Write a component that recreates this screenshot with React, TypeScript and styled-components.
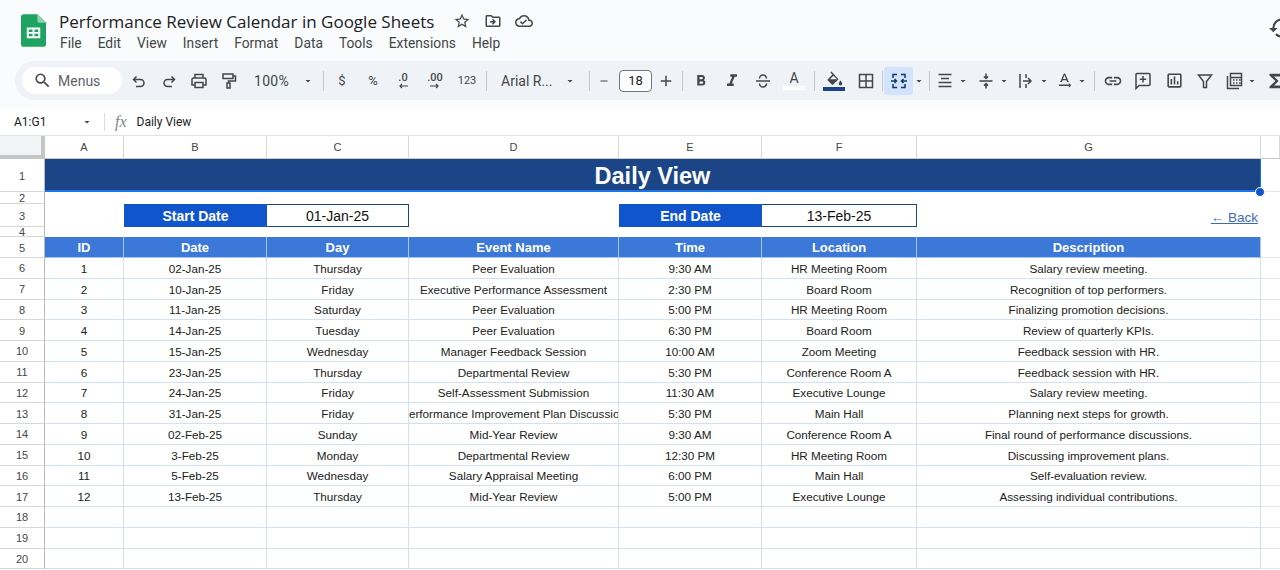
import React from "react";
import styled, { createGlobalStyle } from "styled-components";
import {
    MdSearch,
    MdArrowDropDown,
    MdAdd,
    MdRemove,
    MdFormatBold,
    MdFormatItalic,
    MdTextRotationNone,
    MdLink,
    MdOutlineInsertChart,
    MdFunctions,
    MdOutlineStarBorder,
    MdOutlineDriveFileMove,
    MdOutlineCloudDone,
    MdHistory,
} from "react-icons/md";

const GlobalStyle = createGlobalStyle`
    html, body {
        margin: 0;
        padding: 0;
        background: #fff;
        overflow: hidden;
    }
`;

const Page = styled.div`
    width: 1280px;
    height: 570px;
    overflow: hidden;
    font-family: "Liberation Sans", Arial, sans-serif;
`;

const Chrome = styled.div`
    height: 108px;
    background: #f9fbfd;
    overflow: hidden;
`;

const TitleBar = styled.div`
    height: 61px;
    display: flex;
    align-items: flex-start;
    padding-left: 21px;
`;

const Logo = styled.svg`
    width: 25px;
    height: 33px;
    margin-top: 14px;
    flex: none;
`;

const TitleBlock = styled.div`
    margin-left: 13px;
    padding-top: 10px;
    flex: 1;
`;

const TitleRow = styled.div`
    display: flex;
    align-items: center;
    height: 22px;
    color: #3c4043;
`;

const DocTitle = styled.div`
    font-family: "Open Sans", sans-serif;
    font-size: 17px;
    color: #202124;
    width: 387px;
    white-space: nowrap;
`;

const TitleIcon = styled.span`
    width: 31px;
    display: flex;
    justify-content: center;
    font-size: 18px;
    color: #444746;
`;

const MenuRow = styled.div`
    display: flex;
    margin-top: 1px;
    height: 20px;
    align-items: center;
    gap: 16px;
    padding-left: 1px;
    font-family: "Roboto", sans-serif;
    font-size: 13.8px;
    color: #444746;
`;

const HistoryIcon = styled.div`
    font-size: 26px;
    color: #444746;
    margin-top: 15px;
    margin-right: -14px;
    line-height: 0;
`;

const Toolbar = styled.div`
    height: 39px;
    margin-left: 15px;
    width: 1300px;
    padding-left: 7px;
    box-sizing: border-box;
    background: #eff3f8;
    border-radius: 20px 0 0 20px;
    display: flex;
    align-items: center;
    color: #444746;
`;

const SearchPill = styled.div`
    width: 100px;
    height: 27px;
    box-sizing: border-box;
    background: #fff;
    border-radius: 14px;
    display: flex;
    align-items: center;
    padding-left: 11px;
    gap: 6px;
    font-family: "Roboto", sans-serif;
    font-size: 14px;
    color: #5f6368;
    margin-right: 2px;
    flex: none;
`;

const Tool = styled.div<{ $w: number; $active?: boolean; $size?: number }>`
    width: ${(p) => p.$w}px;
    height: 28px;
    flex: none;
    display: flex;
    align-items: center;
    justify-content: center;
    font-size: ${(p) => p.$size ?? 19}px;
    font-family: "Roboto", sans-serif;
    border-radius: 3px;
    background: ${(p) => (p.$active ? "#d3e3fd" : "transparent")};
    color: ${(p) => (p.$active ? "#0b3a66" : "#444746")};
`;

const ToolText = styled(Tool)`
    font-size: 13px;
`;

const Caret = styled.div`
    width: 12px;
    height: 28px;
    flex: none;
    display: flex;
    align-items: center;
    justify-content: center;
    font-size: 20px;
    color: #444746;
`;

const Sep = styled.div<{ $w: number }>`
    width: ${(p) => p.$w}px;
    height: 20px;
    flex: none;
    display: flex;
    justify-content: center;

    &:after {
        content: "";
        width: 1px;
        background: #c7c9cc;
    }
`;

const SizeBox = styled.div`
    width: 33px;
    height: 22px;
    box-sizing: border-box;
    margin: 0 2px 0 9px;
    border: 1px solid #747775;
    border-radius: 4px;
    background: #fbfcfe;
    display: flex;
    align-items: center;
    justify-content: center;
    font-family: "Roboto", sans-serif;
    font-size: 13px;
    color: #202124;
    flex: none;
`;

const ZoomLabel = styled.div`
    width: 58px;
    padding-left: 10px;
    box-sizing: border-box;
    font-family: "Roboto", sans-serif;
    font-size: 14px;
    letter-spacing: 0.3px;
    flex: none;
`;

const FontLabel = styled.div`
    width: 68px;
    padding-left: 5px;
    box-sizing: border-box;
    font-family: "Roboto", sans-serif;
    font-size: 14px;
    white-space: nowrap;
    flex: none;
`;

const Stack = styled.div`
    display: flex;
    flex-direction: column;
    align-items: center;
    line-height: 1;
`;

const DecimalText = styled.span`
    font-size: 11px;
    font-weight: 500;
    line-height: 11px;
`;

const ColorA = styled.span`
    font-size: 14px;
    line-height: 14px;
`;

const ColorBar = styled.span<{ $color: string }>`
    width: 22px;
    height: 4px;
    margin-top: 1px;
    background: ${(p) => p.$color};
`;

const LineIcon = styled.svg`
    width: 18px;
    height: 18px;
    fill: none;
    stroke: currentColor;
    stroke-width: 1.5;
`;

const FormulaBar = styled.div`
    height: 27px;
    box-sizing: border-box;
    display: flex;
    align-items: center;
    font-size: 12px;
    color: #202124;
    font-family: "Roboto", sans-serif;
`;

const NameBox = styled.div`
    width: 103px;
    padding: 0 10px 0 14px;
    box-sizing: border-box;
    display: flex;
    align-items: center;
    justify-content: space-between;
    font-size: 12px;
    color: #202124;
`;

const FormulaDivider = styled.div`
    width: 1px;
    height: 18px;
    background: #dadce0;
    margin-left: 1px;
`;

const Fx = styled.span`
    font-family: "Liberation Serif", serif;
    font-style: italic;
    font-size: 16px;
    color: #80868b;
    margin: 0 10px 0 10px;
`;

const Sheet = styled.div`
    position: relative;
    display: grid;
    grid-template-columns: 45px 79px 143px 142px 210px 143px 155px 344px 19px;
    grid-template-rows: 23px 33px 12px 23px 10px 21px repeat(15, 20.75px);
    border-top: 1px solid #e1e3e1;
    font-size: 12px;
    color: #202124;
`;

const Corner = styled.div`
    background: #f1f3f4;
    border-right: 4px solid #c4c7c5;
    border-bottom: 4px solid #c4c7c5;
    box-sizing: border-box;
`;

const ColHead = styled.div`
    display: flex;
    align-items: center;
    justify-content: center;
    border-right: 1px solid #d5d7d9;
    border-bottom: 1px solid #c7c9cc;
    box-sizing: border-box;
    font-size: 11px;
    color: #444746;
`;

const RowHead = styled.div`
    display: flex;
    align-items: center;
    justify-content: center;
    overflow: hidden;
    padding-top: 1px;
    border-right: 1px solid #b9bcbf;
    border-bottom: 1px solid #d5d7d9;
    box-sizing: border-box;
    font-size: 11px;
    color: #444746;
`;

const Banner = styled.div`
    grid-column: 2 / span 7;
    display: flex;
    align-items: center;
    justify-content: center;
    padding-top: 3px;
    background: #1c4587;
    border-bottom: 2px solid #1a73e8;
    border-right: 1px solid #1a73e8;
    box-sizing: border-box;
    color: #fff;
    font-size: 23.5px;
    font-weight: bold;
`;

const Handle = styled.div`
    position: absolute;
    left: 1255px;
    top: 51px;
    width: 10px;
    height: 10px;
    border-radius: 50%;
    background: #1155cc;
    border: 1px solid #fff;
    box-sizing: border-box;
`;

const Blank = styled.div<{ $span?: number }>`
    grid-column: span ${(p) => p.$span ?? 1};
`;

const DateLabel = styled.div`
    display: flex;
    align-items: center;
    justify-content: center;
    background: #1155cc;
    color: #fff;
    font-size: 14px;
    font-weight: bold;
`;

const DateValue = styled.div`
    display: flex;
    align-items: center;
    justify-content: center;
    border: 1px solid #1c4587;
    border-left: none;
    box-sizing: border-box;
    background: #fff;
    color: #111;
    font-size: 14px;
`;

const BackCell = styled.div`
    display: flex;
    align-items: flex-end;
    justify-content: flex-end;
    padding-right: 3px;
`;

const BackLink = styled.a`
    color: #3d6bb8;
    font-size: 13.5px;
    text-decoration: underline;
    line-height: 18px;
`;

const HeadCell = styled.div`
    display: flex;
    align-items: center;
    justify-content: center;
    padding-top: 1px;
    background: #3c78d8;
    color: #fff;
    font-size: 13px;
    font-weight: bold;
    border-right: 1px solid #a9c4ee;
    border-bottom: 1px solid #a9c4ee;
    box-sizing: border-box;
`;

const Cell = styled.div`
    display: flex;
    align-items: center;
    justify-content: center;
    overflow: hidden;
    white-space: nowrap;
    padding-top: 1px;
    border-right: 1px solid #d4e0ee;
    border-bottom: 1px solid #d4e0ee;
    box-sizing: border-box;
    font-size: 11.7px;
    color: #222;
`;

const Tail = styled.div`
    border-bottom: 1px solid #e3e8ee;
    box-sizing: border-box;
`;

const UndoIcon = () => (
    <LineIcon viewBox="0 0 18 18">
        <path d="M4 7.500h6.500a3.500 3.500 0 0 1 0 7H6M6.500 4.500l-3 3 3 3" />
    </LineIcon>
);

const RedoIcon = () => (
    <LineIcon viewBox="0 0 18 18">
        <path d="M14 7.500H7.500a3.500 3.500 0 0 0 0 7H12M11.500 4.500l3 3-3 3" />
    </LineIcon>
);

const PrintIcon = () => (
    <LineIcon viewBox="0 0 18 18">
        <path d="M5 6V2.500h8V6M5 13H2V7.500A1.500 1.500 0 0 1 3.500 6h11A1.500 1.500 0 0 1 16 7.500V13h-3M5 10.500h8v5H5z" />
    </LineIcon>
);

const RollerIcon = () => (
    <LineIcon viewBox="0 0 18 18">
        <path d="M3 2h10v4.500H3zM13 4h2.500v5H8.500v2M7 11h3v5H7z" />
    </LineIcon>
);

const StrikeIcon = () => (
    <LineIcon viewBox="0 0 18 18">
        <path d="M2 9h14M5.500 6.500a3.500 3.500 0 0 1 7 0M5.500 11.500a3.500 3.500 0 0 0 7 0" />
    </LineIcon>
);

const BordersIcon = () => (
    <LineIcon viewBox="0 0 18 18">
        <path d="M2.500 2.500h13v13h-13zM9 2.500v13M2.500 9h13" />
    </LineIcon>
);

const MergeIcon = () => (
    <LineIcon viewBox="0 0 18 18">
        <path d="M3 6V2.500h4M11 2.500h4V6M3 12v3.500h4M11 15.500h4V12" />
        <path d="M1 9h5M4.500 7l2 2-2 2M17 9h-5M13.500 7l-2 2 2 2" />
    </LineIcon>
);

const AlignIcon = () => (
    <LineIcon viewBox="0 0 18 18">
        <path d="M2.500 2.500h13M5 6.500h8M2.500 10.500h13M2.500 14.500h13" />
    </LineIcon>
);

const ValignIcon = () => (
    <LineIcon viewBox="0 0 18 18">
        <path d="M2.500 9h13M9 1.500v5M7 4.500l2 2 2-2M9 16.500v-5M7 13.500l2-2 2 2" />
    </LineIcon>
);

const OverflowIcon = () => (
    <LineIcon viewBox="0 0 18 18">
        <path d="M3 2v14M9 2v4M9 12v4" />
        <path d="M6 9h8M11 6l3 3-3 3" />
    </LineIcon>
);

const CommentIcon = () => (
    <LineIcon viewBox="0 0 18 18">
        <path d="M2 16.500V2.500a1 1 0 0 1 1-1h12a1 1 0 0 1 1 1v10a1 1 0 0 1-1 1H5zM9 4v6.500M5.800 7.200h6.400" />
    </LineIcon>
);

const FilterIcon = () => (
    <LineIcon viewBox="0 0 18 18">
        <path d="M2.500 3h13L10.500 9.500v6h-3v-6z" />
    </LineIcon>
);

const FunctionsIcon = () => (
    <LineIcon viewBox="0 0 18 18">
        <path d="M2.500 4v12.500H14" />
        <path d="M5.500 1.500h11v12h-11zM5.500 5.500h11M8 8h1.500M11 8h1.500M14 8h1.500M8 11h1.500M11 11h1.500M14 11h1.500" />
    </LineIcon>
);

const FillIcon = () => (
    <svg width="20" height="15" viewBox="0 0 20 15" fill="currentColor">
        <path d="M7.500 0.500 6.400 1.600l2 2-4.600 4.600a1 1 0 0 0 0 1.400l4 4a1 1 0 0 0 1.400 0l5.300-5.300zM9.500 4.700l3.600 3.600H5.900z" />
        <path d="M16.500 9.500s-1.800 2-1.800 3.200a1.800 1.800 0 0 0 3.600 0c0-1.200-1.800-3.200-1.800-3.200z" />
    </svg>
);

const DecimalArrow = ({ left }: { left?: boolean }) => (
    <svg width="10" height="6" viewBox="0 0 10 6" fill="none" stroke="currentColor" strokeWidth="1.2">
        {left ? <path d="M10 3H2M4 1 2 3l2 2" /> : <path d="M0 3h8M6 1l2 2-2 2" />}
    </svg>
);

const menus = ["File", "Edit", "View", "Insert", "Format", "Data", "Tools", "Extensions", "Help"];

const columns = [
    ["A", "ID"],
    ["B", "Date"],
    ["C", "Day"],
    ["D", "Event Name"],
    ["E", "Time"],
    ["F", "Location"],
    ["G", "Description"],
];

const rows = [
    ["1", "02-Jan-25", "Thursday", "Peer Evaluation", "9:30 AM", "HR Meeting Room", "Salary review meeting."],
    ["2", "10-Jan-25", "Friday", "Executive Performance Assessment", "2:30 PM", "Board Room", "Recognition of top performers."],
    ["3", "11-Jan-25", "Saturday", "Peer Evaluation", "5:00 PM", "HR Meeting Room", "Finalizing promotion decisions."],
    ["4", "14-Jan-25", "Tuesday", "Peer Evaluation", "6:30 PM", "Board Room", "Review of quarterly KPIs."],
    ["5", "15-Jan-25", "Wednesday", "Manager Feedback Session", "10:00 AM", "Zoom Meeting", "Feedback session with HR."],
    ["6", "23-Jan-25", "Thursday", "Departmental Review", "5:30 PM", "Conference Room A", "Feedback session with HR."],
    ["7", "24-Jan-25", "Friday", "Self-Assessment Submission", "11:30 AM", "Executive Lounge", "Salary review meeting."],
    ["8", "31-Jan-25", "Friday", "Performance Improvement Plan Discussion", "5:30 PM", "Main Hall", "Planning next steps for growth."],
    ["9", "02-Feb-25", "Sunday", "Mid-Year Review", "9:30 AM", "Conference Room A", "Final round of performance discussions."],
    ["10", "3-Feb-25", "Monday", "Departmental Review", "12:30 PM", "HR Meeting Room", "Discussing improvement plans."],
    ["11", "5-Feb-25", "Wednesday", "Salary Appraisal Meeting", "6:00 PM", "Main Hall", "Self-evaluation review."],
    ["12", "13-Feb-25", "Thursday", "Mid-Year Review", "5:00 PM", "Executive Lounge", "Assessing individual contributions."],
    ["", "", "", "", "", "", ""],
    ["", "", "", "", "", "", ""],
    ["", "", "", "", "", "", ""],
];

const App = () => (
    <Page>
        <GlobalStyle />
        <Chrome>
            <TitleBar>
                <Logo viewBox="0 0 26 34">
                    <path d="M3 0h14l9 9v22a3 3 0 0 1-3 3H3a3 3 0 0 1-3-3V3a3 3 0 0 1 3-3z" fill="#1ea362" />
                    <path d="M17 0l9 9h-7a2 2 0 0 1-2-2z" fill="#8ed1b1" />
                    <path d="M6 14h14v11H6zM8 16v2.500h4V16zm6 0v2.500h4V16zM8 20.500V23h4v-2.500zm6 0V23h4v-2.500z" fill="#fff" fillRule="evenodd" />
                </Logo>
                <TitleBlock>
                    <TitleRow>
                        <DocTitle>Performance Review Calendar in Google Sheets</DocTitle>
                        <TitleIcon><MdOutlineStarBorder /></TitleIcon>
                        <TitleIcon><MdOutlineDriveFileMove /></TitleIcon>
                        <TitleIcon><MdOutlineCloudDone /></TitleIcon>
                    </TitleRow>
                    <MenuRow>
                        {menus.map((m) => (
                            <span key={m}>{m}</span>
                        ))}
                    </MenuRow>
                </TitleBlock>
                <HistoryIcon><MdHistory /></HistoryIcon>
            </TitleBar>
            <Toolbar>
                <SearchPill><MdSearch size={19} color="#444746" />Menus</SearchPill>
                <Tool $w={30}><UndoIcon /></Tool>
                <Tool $w={29}><RedoIcon /></Tool>
                <Tool $w={31}><PrintIcon /></Tool>
                <Tool $w={30}><RollerIcon /></Tool>
                <ZoomLabel>100%</ZoomLabel>
                <Caret><MdArrowDropDown /></Caret>
                <Sep $w={18} />
                <ToolText $w={20}>$</ToolText>
                <ToolText $w={42}>%</ToolText>
                <Tool $w={18}>
                    <Stack><DecimalText>.0</DecimalText><DecimalArrow left /></Stack>
                </Tool>
                <Tool $w={46}>
                    <Stack><DecimalText>.00</DecimalText><DecimalArrow /></Stack>
                </Tool>
                <Tool $w={18} $size={11}>123</Tool>
                <Sep $w={20} />
                <FontLabel>Arial R...</FontLabel>
                <Caret><MdArrowDropDown /></Caret>
                <Tool $w={4} />
                <Sep $w={18} />
                <Tool $w={12} $size={16}><MdRemove /></Tool>
                <SizeBox>18</SizeBox>
                <Tool $w={23} $size={18}><MdAdd /></Tool>
                <Sep $w={10} />
                <Tool $w={28} $size={18}><MdFormatBold /></Tool>
                <Tool $w={34} $size={20}><MdFormatItalic /></Tool>
                <Tool $w={28}><StrikeIcon /></Tool>
                <Tool $w={34}>
                    <Stack><ColorA>A</ColorA><ColorBar $color="#ffffff" /></Stack>
                </Tool>
                <Sep $w={6} />
                <Tool $w={34}>
                    <Stack><FillIcon /><ColorBar $color="#1c4587" /></Stack>
                </Tool>
                <Tool $w={30}><BordersIcon /></Tool>
                <Sep $w={3} />
                <Tool $w={29} $active><MergeIcon /></Tool>
                <Caret><MdArrowDropDown /></Caret>
                <Sep $w={8} />
                <Tool $w={24}><AlignIcon /></Tool>
                <Caret><MdArrowDropDown /></Caret>
                <Tool $w={5} />
                <Tool $w={24}><ValignIcon /></Tool>
                <Caret><MdArrowDropDown /></Caret>
                <Tool $w={4} />
                <Tool $w={24}><OverflowIcon /></Tool>
                <Caret><MdArrowDropDown /></Caret>
                <Tool $w={2} />
                <Tool $w={24}><MdTextRotationNone /></Tool>
                <Caret><MdArrowDropDown /></Caret>
                <Sep $w={12} />
                <Tool $w={26} $size={20}><MdLink /></Tool>
                <Tool $w={34}><CommentIcon /></Tool>
                <Tool $w={29}><MdOutlineInsertChart /></Tool>
                <Tool $w={32}><FilterIcon /></Tool>
                <Tool $w={25}><FunctionsIcon /></Tool>
                <Caret><MdArrowDropDown /></Caret>
                <Tool $w={5} />
                <Tool $w={24} $size={22}><MdFunctions /></Tool>
            </Toolbar>
        </Chrome>
        <FormulaBar>
            <NameBox>A1:G1<Caret><MdArrowDropDown /></Caret></NameBox>
            <FormulaDivider />
            <Fx>fx</Fx>
            Daily View
        </FormulaBar>
        <Sheet>
            <Corner />
            {columns.map(([letter]) => (
                <ColHead key={letter}>{letter}</ColHead>
            ))}
            <ColHead />

            <RowHead>1</RowHead>
            <Banner>Daily View</Banner>
            <Tail />

            <RowHead>2</RowHead>
            <Blank $span={8} />

            <RowHead>3</RowHead>
            <Blank />
            <DateLabel>Start Date</DateLabel>
            <DateValue>01-Jan-25</DateValue>
            <Blank />
            <DateLabel>End Date</DateLabel>
            <DateValue>13-Feb-25</DateValue>
            <BackCell><BackLink href="#">← Back</BackLink></BackCell>
            <Blank />

            <RowHead>4</RowHead>
            <Blank $span={8} />

            <RowHead>5</RowHead>
            {columns.map(([letter, name]) => (
                <HeadCell key={letter}>{name}</HeadCell>
            ))}
            <Tail />

            {rows.map((row, i) => (
                <React.Fragment key={i}>
                    <RowHead>{i + 6}</RowHead>
                    {row.map((value, j) => (
                        <Cell key={j}>{value}</Cell>
                    ))}
                    <Tail />
                </React.Fragment>
            ))}
            <Handle />
        </Sheet>
    </Page>
);

export default App;
